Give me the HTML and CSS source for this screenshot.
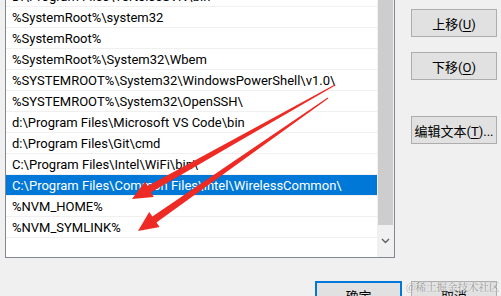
FILE: index.html
```html
<!DOCTYPE html>
<html>
<head>
  <title>编辑环境变量</title>
  <meta charset="UTF-8">
  <link rel="stylesheet" href="styles.css">
</head>
<body>
<div class="dialog">
  <div class="main">
    <div class="listbox">
      <ul class="items">
        <li>D:\Program Files\TortoiseSVN\bin</li>
        <li>%SystemRoot%\system32</li>
        <li>%SystemRoot%</li>
        <li>%SystemRoot%\System32\Wbem</li>
        <li>%SYSTEMROOT%\System32\WindowsPowerShell\v1.0\</li>
        <li>%SYSTEMROOT%\System32\OpenSSH\</li>
        <li>d:\Program Files\Microsoft VS Code\bin</li>
        <li>d:\Program Files\Git\cmd</li>
        <li>C:\Program Files\Intel\WiFi\bin\</li>
        <li class="selected">C:\Program Files\Common Files\Intel\WirelessCommon\</li>
        <li>%NVM_HOME%</li>
        <li>%NVM_SYMLINK%</li>
      </ul>
      <div class="scrollbar">
        <div class="thumb"></div>
        <div class="arrow">
          <svg width="9" height="6" viewBox="0 0 9 6"><path d="M1 1 L4.5 4.5 L8 1" fill="none" stroke="#606060" stroke-width="1.4"/></svg>
        </div>
      </div>
    </div>
    <div class="side">
      <button class="btn up">上移(<u>U</u>)</button>
      <button class="btn down">下移(<u>O</u>)</button>
      <button class="btn edit">编辑文本(<u>T</u>)...</button>
    </div>
  </div>
  <div class="footer">
    <button class="btn default">确定</button>
    <button class="btn">取消</button>
  </div>

  <svg class="annot" width="501" height="296" viewBox="0 0 501 296">
    <polygon fill="#ee2a24" points="335.2,85.4 151.1,192.3 153.8,197.0 132,199 145.0,181.4 147.7,186.1 334.8,84.6"/>
    <polygon fill="#ee2a24" points="328.3,98.4 156.4,222.4 159.6,226.9 138,231 149.2,212.1 152.4,216.6 327.7,97.6"/>
  </svg>
  <div class="watermark">@稀土掘金技术社区</div>
</div>
</body>
</html>
```

FILE: styles.css
```css
body {
  margin: 0; background: #f0f0f0;
  font-family: Roboto, "Noto Sans CJK SC", sans-serif; font-size: 13px; color: #000;
}
.dialog { position: relative; width: 501px; height: 296px; overflow: hidden; padding-left: 5px; box-sizing: border-box; }
.main { display: flex; }

.listbox {
  display: flex; width: 390px; height: 273px; margin-top: -15px;
  border: 1px solid #828790; box-sizing: border-box; background: #fff;
}
.items { flex: 1; margin: 0; padding: 0; list-style: none; }
.items li {
  line-height: 20px; padding-left: 6px; padding-top: 1px;
  height: 19px; border-bottom: 1px solid #f0f0f0; white-space: nowrap; overflow: hidden;
}
.items li.selected { background: #0078d7; color: #fff; }

.scrollbar { width: 17px; display: flex; flex-direction: column; background: #f0f0f0; }
.thumb { height: 239px; background: #cdcdcd; margin: 0 1px; }
.arrow { flex: 1; display: flex; align-items: center; justify-content: center; }

.side { display: flex; flex-direction: column; margin-left: 16px; padding-top: 9px; }
.btn {
  width: 86px; height: 28px; padding: 0; background: #e1e1e1; border: 1px solid #adadad;
  font-family: Roboto, "Noto Sans CJK SC", sans-serif; font-size: 13px; color: #000;
}
.btn u { text-underline-offset: 2px; }
.down { margin-top: 15px; }
.edit { margin-top: 36px; }

.footer { display: flex; justify-content: flex-end; gap: 9px; margin-top: 23px; padding-right: 4px; }
.default { border: 2px solid #0078d7; width: 87px; }

.annot { position: absolute; left: 0; top: 0; }
.watermark {
  position: absolute; left: 406px; top: 279px; font-size: 10.5px; color: rgba(120,120,120,0.75);
  font-family: "Noto Serif CJK SC", "Noto Sans CJK SC", serif;
  text-shadow: 0 0 2px #fff;
}
```
